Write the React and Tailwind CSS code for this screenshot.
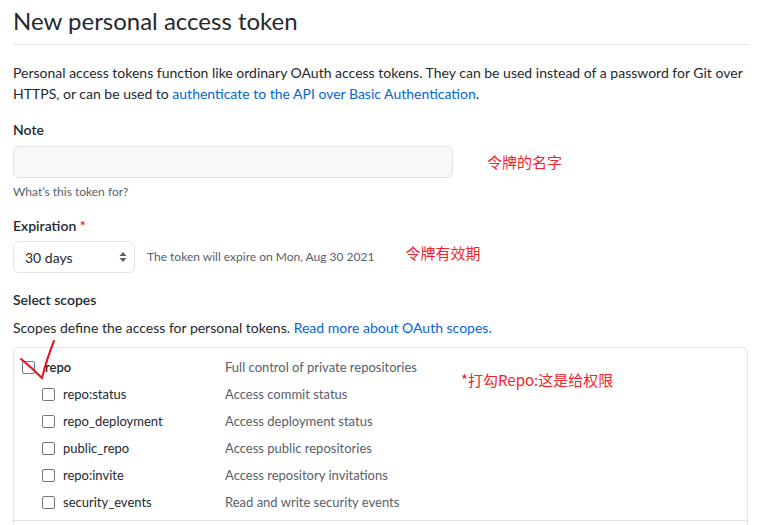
export default function App() {
  const scopes = [
    { name: 'repo:status', desc: 'Access commit status' },
    { name: 'repo_deployment', desc: 'Access deployment status' },
    { name: 'public_repo', desc: 'Access public repositories' },
    { name: 'repo:invite', desc: 'Access repository invitations' },
    { name: 'security_events', desc: 'Read and write security events' },
  ];

  const box = 'w-[13px] h-[13px] border border-[#767676] rounded-[2px] bg-white shrink-0';

  return (
    <div className="relative w-[771px] h-[525px] overflow-hidden bg-white text-[#24292e] font-['Segoe_UI','Lato','Noto_Sans_CJK_SC',sans-serif]">
      <div className="pl-[13px] pr-[23px]">
        {/* Header */}
        <h1 className="text-[24px] leading-[30px] pt-[6px] pb-[8px] font-normal border-b border-[#e1e4e8]">
          New personal access token
        </h1>

        <p className="text-[14px] leading-[21px] mt-[17px] whitespace-nowrap">
          Personal access tokens function like ordinary OAuth access tokens. They can be used instead of a password for Git over
          <br />
          HTTPS, or can be used to <span className="text-[#0366d6]">authenticate to the API over Basic Authentication</span>.
        </p>

        {/* Note */}
        <div className="mt-[15px] text-[14px] font-semibold leading-[21px]">Note</div>
        <div className="mt-[6px] flex items-center">
          <div className="w-[440px] h-[32px] bg-[#f6f8fa] border border-[#e1e4e8] rounded-[6px]" />
          <span className="ml-[34px] text-[15px] text-[#f5222d] font-['Noto_Sans_CJK_SC',sans-serif]">令牌的名字</span>
        </div>
        <div className="mt-[5px] text-[12px] leading-[18px] text-[#586069]">What’s this token for?</div>

        {/* Expiration */}
        <div className="mt-[14px] text-[14px] font-semibold leading-[21px]">
          Expiration <span className="text-[#cb2431]">*</span>
        </div>
        <div className="mt-[5px] flex items-center">
          <div className="w-[122px] h-[32px] border border-[#e1e4e8] rounded-[6px] flex items-center justify-between pl-[11px] pr-[7px] text-[14px]">
            <span>30 days</span>
            <svg width="8" height="12" viewBox="0 0 8 12" fill="#586069">
              <path d="M4 1 L7.5 5 L0.5 5 Z" />
              <path d="M4 11 L7.5 7 L0.5 7 Z" />
            </svg>
          </div>
          <span className="ml-[12px] text-[12px] text-[#586069]">The token will expire on Mon, Aug 30 2021</span>
          <span className="ml-[31px] -mt-[8px] text-[15px] text-[#f5222d] font-['Noto_Sans_CJK_SC',sans-serif]">令牌有效期</span>
        </div>

        {/* Scopes */}
        <div className="mt-[16px] text-[14px] font-semibold leading-[21px]">Select scopes</div>
        <p className="mt-[7px] text-[14px] leading-[21px]">
          Scopes define the access for personal tokens. <span className="text-[#0366d6]">Read more about OAuth scopes.</span>
        </p>

        <div className="mt-[9px] border border-[#e1e4e8] rounded-t-[6px] border-b-0">
          <div className="pt-[6px] pb-[4px] border-b border-[#e1e4e8]">
            <div className="flex items-center h-[27px] text-[13px]">
              <div className="w-[211px] flex items-center pl-[8px]">
                <div className={box} />
                <span className="ml-[10px] font-semibold">repo</span>
              </div>
              <span className="text-[#586069]">Full control of private repositories</span>
            </div>
            {scopes.map((s) => (
              <div key={s.name} className="flex items-center h-[27px] text-[13px]">
                <div className="w-[211px] flex items-center pl-[28px]">
                  <div className={box} />
                  <span className="ml-[8px]">{s.name}</span>
                </div>
                <span className="text-[#586069]">{s.desc}</span>
              </div>
            ))}
          </div>
          <div className="h-[20px]" />
        </div>
      </div>

      {/* Annotation overlay */}
      <span className="absolute left-[461px] top-[369px] text-[15px] text-[#f5222d] font-['Noto_Sans_CJK_SC',sans-serif]">*打勾Repo:这是给权限</span>
      <svg className="absolute left-0 top-0 pointer-events-none" width="771" height="525">
        <path d="M21 359 Q32 368 42 378 Q47 358 54 341" fill="none" stroke="#e8101c" strokeWidth="2" strokeLinecap="round" />
      </svg>
    </div>
  );
}
